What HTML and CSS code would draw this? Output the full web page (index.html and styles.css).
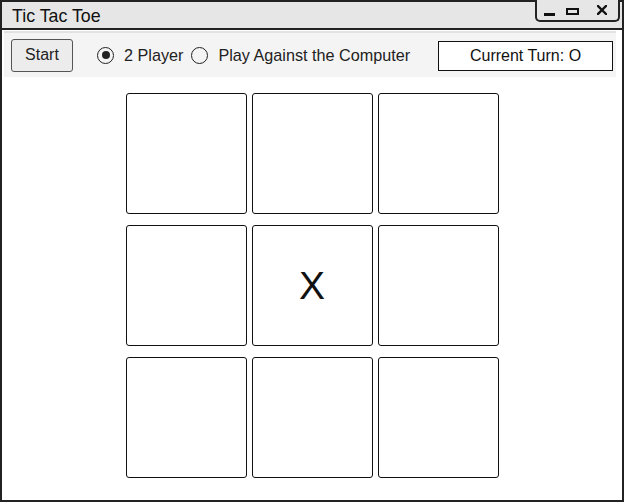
FILE: index.html
```html
<!DOCTYPE html>
<html>
<head>
<meta charset="utf-8">
<link rel="stylesheet" href="styles.css">
</head>
<body>
<div class="window">
  <div class="titlebar">
    <span class="title">Tic Tac Toe</span>
    <div class="controls">
      <span class="min"></span>
      <span class="max"></span>
      <svg class="close" width="10" height="10" viewBox="0 0 10 10"><path d="M1 1 L9 9 M9 1 L1 9" stroke="#111" stroke-width="2.4" stroke-linecap="square"/></svg>
    </div>
  </div>
  <div class="toolbar">
    <button class="start">Start</button>
    <label class="radio"><span class="dot checked"></span>2 Player</label>
    <label class="radio"><span class="dot"></span>Play Against the Computer</label>
    <div class="turn">Current Turn: O</div>
  </div>
  <div class="board">
    <div class="cell"></div>
    <div class="cell"></div>
    <div class="cell"></div>
    <div class="cell"></div>
    <div class="cell">X</div>
    <div class="cell"></div>
    <div class="cell"></div>
    <div class="cell"></div>
    <div class="cell"></div>
  </div>
</div>
</body>
</html>
```
FILE: styles.css
```css
* { box-sizing: border-box; }
html, body { margin: 0; padding: 0; background: #fff; }
body { font-family: "Liberation Sans", Arial, sans-serif; color: #111; }
.window {
  position: relative;
  width: 624px;
  height: 502px;
  border: 2px solid #222;
  background: #fff;
}
.titlebar {
  height: 28px;
  background: #e6e6e6;
  border-bottom: 2px solid #222;
  display: flex;
  align-items: center;
  padding-left: 10px;
}
.title { font-size: 17.8px; color: #111; margin-top: 2px; }
.controls {
  position: absolute;
  top: -2px;
  right: 2px;
  width: 85px;
  height: 22px;
  border: 2px solid #222;
  border-top: none;
  border-radius: 0 0 5px 5px;
  background: #e6e6e6;
  display: flex;
  align-items: center;
  padding: 2px 0 0 7px;
}
.min { width: 11px; height: 3px; background: #111; margin-top: 7px; }
.max { width: 13px; height: 7px; border: 2px solid #111; margin-left: 11px; }
.close { margin-left: 18px; margin-top: -2px; }
.toolbar {
  margin: 1px 6px 0 2px;
  height: 46px;
  background: #f4f4f4;
  border-top: 2px solid #e2e2e2;
  display: flex;
  align-items: center;
  padding-left: 7px;
  font-size: 16px;
}
.start {
  width: 62px;
  height: 33px;
  border: 1px solid #555;
  border-radius: 3px;
  background: #ececec;
  font-family: "Liberation Sans", Arial, sans-serif;
  font-size: 16px;
  color: #222;
  padding: 0;
  margin-right: 24px;
}
.radio { display: flex; align-items: center; color: #222; margin-right: 8px; font-size: 16.2px; }
.dot {
  width: 17px;
  height: 17px;
  border: 1.5px solid #222;
  border-radius: 50%;
  margin-right: 10px;
  display: flex;
  align-items: center;
  justify-content: center;
}
.dot.checked::after {
  content: "";
  width: 8px;
  height: 8px;
  border-radius: 50%;
  background: #222;
}
.turn {
  margin-left: auto;
  margin-right: 3px;
  width: 175px;
  height: 30px;
  border: 1px solid #111;
  background: #fff;
  display: flex;
  align-items: center;
  justify-content: center;
  color: #111;
  margin-top: 2px;
}
.board {
  display: grid;
  grid-template-columns: repeat(3, 121px);
  grid-auto-rows: 121px;
  column-gap: 5px;
  row-gap: 11px;
  justify-content: center;
  margin-top: 16px;
  margin-left: -2px;
  margin-right: -2px;
}
.cell {
  border: 1px solid #111;
  border-radius: 3px;
  display: flex;
  align-items: center;
  justify-content: center;
  font-size: 39px;
  color: #111;
}
```
